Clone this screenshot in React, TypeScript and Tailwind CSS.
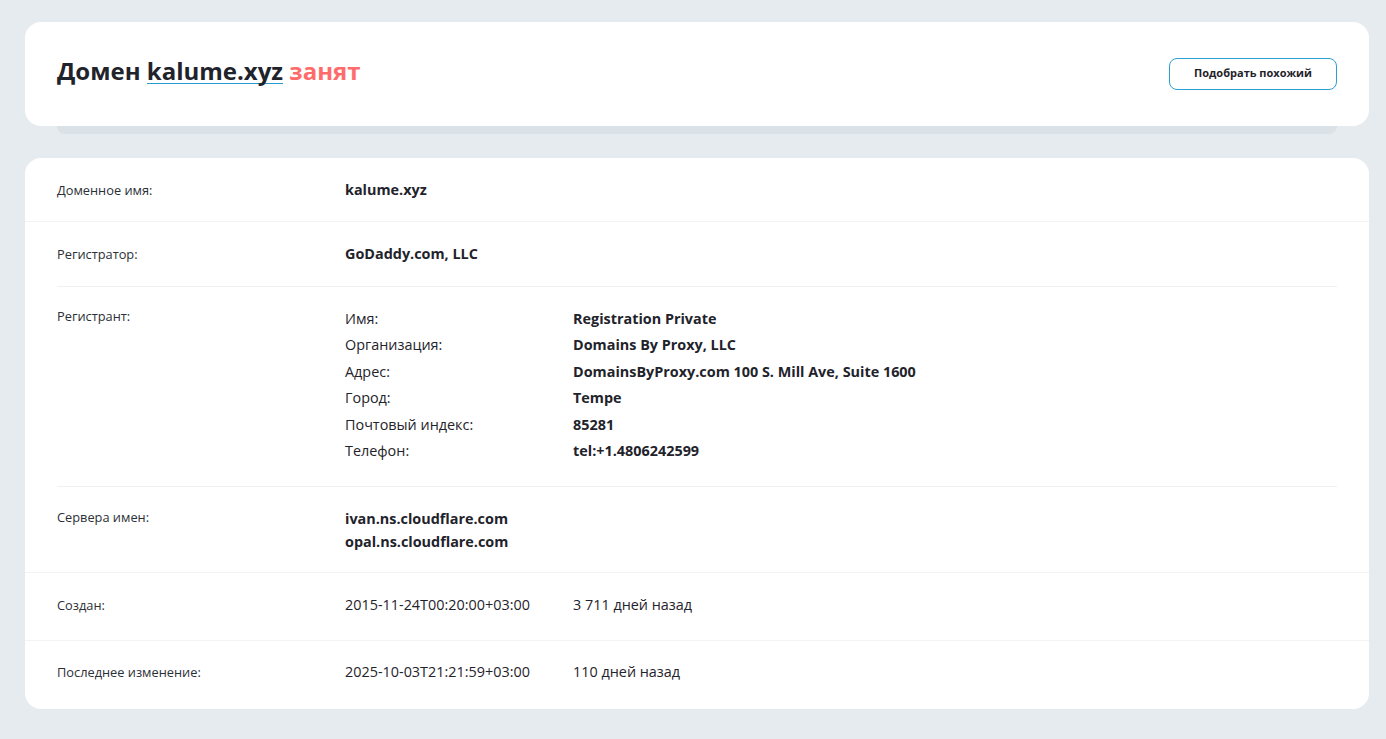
const registrant: [string, string][] = [
  ["Имя:", "Registration Private"],
  ["Организация:", "Domains By Proxy, LLC"],
  ["Адрес:", "DomainsByProxy.com 100 S. Mill Ave, Suite 1600"],
  ["Город:", "Tempe"],
  ["Почтовый индекс:", "85281"],
  ["Телефон:", "tel:+1.4806242599"],
];

function Row({
  label,
  children,
  className = "",
  line = "full",
}: {
  label: string;
  children: React.ReactNode;
  className?: string;
  line?: "full" | "inset" | "none";
}) {
  return (
    <div>
      <div className={`flex px-[32px] ${className}`}>
        <div className="w-[288px] shrink-0 text-[12.8px] leading-[20px] text-[#2b2f36]">{label}</div>
        <div className="flex-1">{children}</div>
      </div>
      {line === "full" && <div className="h-px bg-[#f1f3f5]" />}
      {line === "inset" && <div className="mx-[32px] h-px bg-[#eef0f2]" />}
    </div>
  );
}

export default function App() {
  return (
    <div
      className="min-h-screen bg-[#e6ebef] pl-[25px] pr-[17px] pt-[22px] pb-[30px] text-[#1f232b]"
      style={{ fontFamily: '"Open Sans", "Noto Sans", sans-serif' }}
    >
      <div>
        <div className="flex h-[104px] items-center justify-between rounded-[16px] bg-white px-[32px]">
          <h1 className="mb-[6px] text-[24px] font-bold leading-[30px] text-[#1f232b]">
            Домен{" "}
            <span className="inline-block border-b border-[#2a9bd0] leading-[25px]">kalume.xyz</span>{" "}
            <span className="text-[#ff6b6b]">занят</span>
          </h1>
          <button className="mb-[1px] h-[32px] w-[168px] rounded-[8px] border border-[#2aa0d0] bg-white text-[11px] font-bold text-[#1f232b]">
            Подобрать похожий
          </button>
        </div>
        <div className="mx-[32px] h-[8px] rounded-b-[10px] bg-[#dae1e7]" />
      </div>

      <div className="mt-[24px] overflow-hidden rounded-[16px] bg-white text-[14.4px]">
        <Row label="Доменное имя:" className="h-[63px] items-center">
          <div className="font-bold leading-[20px]">kalume.xyz</div>
        </Row>
        <Row label="Регистратор:" line="inset" className="h-[64px] items-center">
          <div className="font-bold leading-[20px]">GoDaddy.com, LLC</div>
        </Row>
        <Row label="Регистрант:" line="inset" className="h-[199px] items-start pt-[19px]">
          <div className="grid grid-cols-[228px_1fr] leading-[26.4px]">
            {registrant.map(([k, v]) => (
              <div key={k} className="contents">
                <div>{k}</div>
                <div className="font-bold">{v}</div>
              </div>
            ))}
          </div>
        </Row>
        <Row label="Сервера имен:" className="h-[85px] items-start pt-[20px]">
          <div className="font-bold leading-[23px]">
            <div>ivan.ns.cloudflare.com</div>
            <div>opal.ns.cloudflare.com</div>
          </div>
        </Row>
        <Row label="Создан:" className="h-[67px] items-start pt-[22px]">
          <div className="flex leading-[20px]">
            <span className="w-[228px]">2015-11-24T00:20:00+03:00</span>
            <span>3 711 дней назад</span>
          </div>
        </Row>
        <Row label="Последнее изменение:" line="none" className="h-[68px] items-start pt-[21px]">
          <div className="flex leading-[20px]">
            <span className="w-[228px]">2025-10-03T21:21:59+03:00</span>
            <span>110 дней назад</span>
          </div>
        </Row>
      </div>
    </div>
  );
}
